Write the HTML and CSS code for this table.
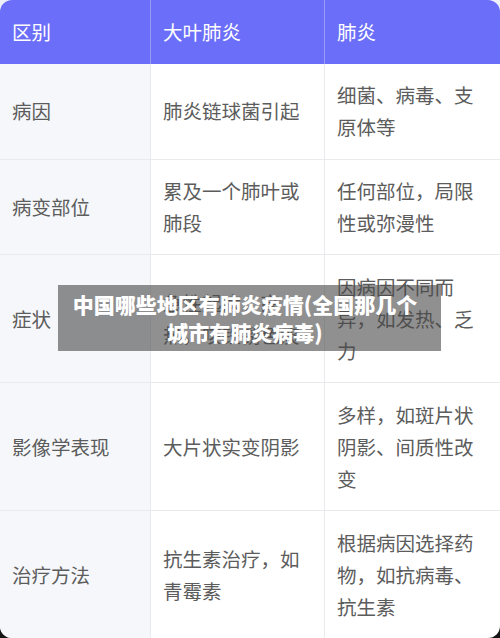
FILE: index.html
```html
<!DOCTYPE html>
<html lang="zh-CN">
<head>
    <meta charset="UTF-8">
    <meta name="viewport" content="width=device-width, initial-scale=1.0">
    <title>大叶肺炎与肺炎区别</title>
    <link rel="stylesheet" href="styles.css">
</head>
<body>
    <div class="page">
        <table class="compare">
            <thead>
                <tr>
                    <th class="c1">区别</th>
                    <th class="c2">大叶肺炎</th>
                    <th class="c3">肺炎</th>
                </tr>
            </thead>
            <tbody>
                <tr>
                    <td class="label">病因</td>
                    <td>肺炎链球菌引起</td>
                    <td>细菌、病毒、支原体等</td>
                </tr>
                <tr>
                    <td class="label">病变部位</td>
                    <td>累及一个肺叶或肺段</td>
                    <td>任何部位，局限性或弥漫性</td>
                </tr>
                <tr>
                    <td class="label">症状</td>
                    <td>急性起病，高热，咳铁锈色痰</td>
                    <td>因病因不同而异，如发热、乏力</td>
                </tr>
                <tr>
                    <td class="label">影像学表现</td>
                    <td>大片状实变阴影</td>
                    <td>多样，如斑片状阴影、间质性改变</td>
                </tr>
                <tr>
                    <td class="label">治疗方法</td>
                    <td>抗生素治疗，如青霉素</td>
                    <td>根据病因选择药物，如抗病毒、抗生素</td>
                </tr>
            </tbody>
        </table>

        <div class="caption">中国哪些地区有肺炎疫情(全国那几个城市有肺炎病毒)</div>
    </div>
</body>
</html>
```

FILE: styles.css
```css
html {
    background: linear-gradient(#eef0fa 50%, #151515 50%);
}

body {
    margin: 0;
    font-family: "Noto Sans CJK SC", "Noto Sans", sans-serif;
}

.page {
    position: relative;
    width: 500px;
    height: 638px;
    overflow: hidden;
}

.compare {
    width: 500px;
    height: 638px;
    border-collapse: separate;
    border-spacing: 0;
    border-radius: 12px;
    overflow: hidden;
    background: #fff;
    table-layout: fixed;
}

.compare th,
.compare td {
    text-align: left;
    vertical-align: middle;
    font-size: 19.5px;
    line-height: 32px;
    padding: 15px 12px;
}

.compare th {
    background-color: #6b6ef8;
    color: #fff;
    font-weight: normal;
    height: 34px;
    border-right: 1px solid #9b9df5;
}

.compare th:last-child {
    border-right: none;
}

.c1 {
    width: 126px;
}

.c2 {
    width: 149px;
}

.compare td {
    color: #5c5c5c;
    border-right: 1px solid #e8eaee;
    border-bottom: 1px solid #e8eaee;
}

.compare td:last-child {
    border-right: none;
}

.compare tr:last-child td {
    border-bottom: none;
}

.compare td.label {
    background-color: #f5f7fa;
}

.caption {
    position: absolute;
    left: 58px;
    top: 285px;
    width: 352px;
    padding: 5px 20px 5px 11px;
    background: rgba(70, 70, 70, 0.6);
    color: #fff;
    font-weight: 900;
    font-size: 21px;
    line-height: 28px;
    text-align: center;
}
```
